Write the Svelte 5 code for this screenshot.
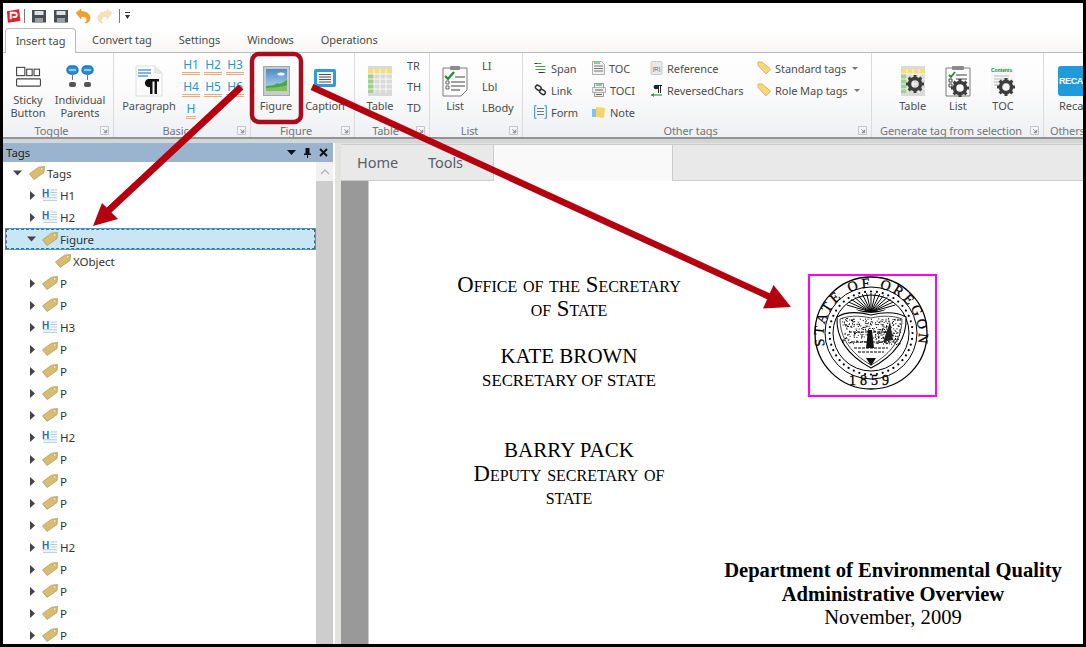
<script>
  const rows = [
    { l: 0, a: 'down', i: 'tag', t: 'Tags' },
    { l: 1, a: 'right', i: 'h', t: 'H1' },
    { l: 1, a: 'right', i: 'h', t: 'H2' },
    { l: 1, a: 'down', i: 'tag', t: 'Figure', sel: true },
    { l: 2, a: '', i: 'tag', t: 'XObject' },
    ...['P','P','H3','P','P','P','P','H2','P','P','P','P','H2','P','P','P','P'].map((t) => ({
      l: 1, a: 'right', i: t[0] === 'H' ? 'h' : 'tag', t
    }))
  ];
  const hs = ['H1', 'H2', 'H3', 'H4', 'H5', 'H6', 'H'];
  // deterministic speckle for the seal's shield
  const specks = [];
  let s = 7;
  const rnd = () => ((s = (s * 16807) % 2147483647) / 2147483647);
  for (let i = 0; i < 340; i++) {
    const x = 40 + rnd() * 58, y = 54 + rnd() * 26;
    specks.push({ x: x.toFixed(1), y: y.toFixed(1) });
  }
  const dots = Array.from({ length: 44 }, (_, i) => {
    const an = (i / 44) * Math.PI * 2;
    return { x: (69 + 41.5 * Math.cos(an)).toFixed(1), y: (69 + 41.5 * Math.sin(an)).toFixed(1) };
  });
  const rays = Array.from({ length: 15 }, (_, i) => {
    const an = Math.PI * (1.12 + (i / 14) * 0.76);
    return { x: (69 + 26 * Math.cos(an)).toFixed(1), y: (48 + 19 * Math.sin(an)).toFixed(1) };
  });
</script>

{#snippet launcher()}
  <svg class="launch" width="9" height="9" viewBox="0 0 9 9"><path d="M.5.5h8v8h-8z" fill="#f4f5f6" stroke="#c3c5c8"/><path d="M3 3l3.5 3.5M6.8 3.8v3h-3z" fill="#8d9196" stroke="#8d9196" stroke-width=".8"/></svg>
{/snippet}

{#snippet tagIcon()}
  <svg class="ti" width="16" height="14" viewBox="0 0 16 14"><path d="M.5 7.800 9.500 1.200 15.500.5 15 6.500 5 13.500z" fill="#d8bd70" stroke="#ad9250" stroke-width=".7"/><circle cx="12.800" cy="3" r="1.200" fill="#fff" stroke="#a88d48" stroke-width=".5"/></svg>
{/snippet}

{#snippet hIcon()}
  <svg class="ti" width="16" height="14" viewBox="0 0 16 14"><text x="0" y="8.500" class="hg">H</text><path d="M8.500 2h6.500M8.500 4.500h6.500M8.500 7h6.500M1 9.800h14M1 12.300h14" stroke="#a9c6e4" stroke-width="1"/></svg>
{/snippet}

{#snippet tagSmall()}
  <svg width="15" height="14" viewBox="0 0 15 14"><path d="M1 4.500V1h4l8.500 7-4.500 5z" fill="#f7d67e" stroke="#dcb558" stroke-width="1" stroke-linejoin="round"/></svg>
{/snippet}

{#snippet gear(x, y)}
  <g transform="translate({x} {y})">
    <circle r="5.500" fill="none" stroke="#3d3d3d" stroke-width="3.500"/>
    <path d="M-1.500-9h3v3h-3zM-1.500 6h3v3h-3zM-9-1.500h3v3h-3zM6-1.500h3v3h-3z" fill="#3d3d3d"/>
    <path d="M-1.500-9h3v3h-3zM-1.500 6h3v3h-3zM-9-1.500h3v3h-3zM6-1.500h3v3h-3z" fill="#3d3d3d" transform="rotate(45)"/>
  </g>
{/snippet}

<div class="shot">
  <div class="qat">
    <svg width="15" height="16" viewBox="0 0 16 16"><path d="M1 3 14 .8l1.300 12.500L2 15.300z" fill="#e3202c"/><path d="M5 11.500V4.500h4.200a2.300 2.300 0 0 1 0 4.600H7" fill="none" stroke="#fff" stroke-width="2"/></svg>
    <i class="qsep"></i>
    <svg class="mr" width="16" height="16" viewBox="0 0 16 16"><path d="M1 2h14v12.500H1z" fill="#474d53"/><path d="M3.500 3h9v4h-9z" fill="#dfe1e3"/><path d="M4 10h8v4.500H4z" fill="#9aa0a5"/></svg>
    <svg class="mr" width="16" height="16" viewBox="0 0 16 16"><path d="M1 2h14v12.500H1z" fill="#474d53"/><path d="M3.500 3h9v4h-9z" fill="#dfe1e3"/><path d="M4 10h8v4.500H4z" fill="#9aa0a5"/></svg>
    <svg class="mr" width="16" height="16" viewBox="0 0 16 16"><path d="M1 5 6 1v2.500c5 0 9 2 9 6.500 0 3-2 5-5 5 2-1.500 2.500-3.500 1-5-1-1-3-1.500-5-1.500V11z" fill="#f0a030" stroke="#e08a18" stroke-width=".5"/></svg>
    <svg class="mr" width="16" height="16" viewBox="0 0 16 16"><path d="M15 5 10 1v2.500c-5 0-9 2-9 6.500 0 3 2 5 5 5-2-1.500-2.500-3.500-1-5 1-1 3-1.500 5-1.500V11z" fill="#f9dfb4" stroke="#f0d098" stroke-width=".5"/></svg>
    <i class="qsep s2"></i>
    <svg width="5" height="8" viewBox="0 0 5 8"><path d="M0 0h5v1H0zM0 3h5L2.500 7z" fill="#333"/></svg>
  </div>

  <div class="tabs">
    <div class="tab active">Insert tag</div>
    <div class="tab">Convert tag</div>
    <div class="tab">Settings</div>
    <div class="tab">Windows</div>
    <div class="tab">Operations</div>
  </div>

  <div class="ribbon">
    <section class="group g1">
      <div class="gbody">
        <div class="big two w50">
          <span class="ic"><svg width="27" height="22" viewBox="0 0 28 24"><g fill="#fff" stroke="#444" stroke-width="1.200"><rect x="1" y="1.500" width="9" height="9"/><rect x="12" y="3.500" width="6" height="7"/><rect x="20" y="3.500" width="6" height="7"/><rect x="1" y="14" width="26" height="8" rx="1"/></g></svg></span>
          <span class="lb">Sticky<br />Button</span>
        </div>
        <div class="big two w54">
          <span class="ic"><svg width="28" height="24" viewBox="0 0 28 24"><g fill="#fff" stroke="#1778c0" stroke-width="1.400"><rect x="1" y="1" width="11" height="8" rx="4" fill="#2b8fd6"/><rect x="16" y="1" width="11" height="8" rx="4" fill="#2b8fd6"/></g><path d="M3 5h7M18 5h7" stroke="#fff" stroke-width="1.200"/><path d="M6.500 10v5M21.500 10v5" stroke="#777"/><rect x="3" y="17" width="7" height="5" rx="2" fill="#555"/><rect x="18" y="17" width="7" height="5" rx="2" fill="#555"/></svg></span>
          <span class="lb">Individual<br />Parents</span>
        </div>
      </div>
      <div class="glabel"><span>Toggle</span>{@render launcher()}</div>
    </section>

    <section class="group g2">
      <div class="gbody">
        <div class="big w60">
          <span class="ic"><svg width="28" height="32" viewBox="0 0 28 32"><path d="M1 1h19l7 7v23H1z" fill="#fbfbfb" stroke="#dedede"/><path d="M20 1v7h7" fill="#e8e8e8" stroke="#dedede"/><path d="M3 5h13M3 8h13M3 11h10" stroke="#5aa0dc" stroke-width="1.300"/><path d="M13 14H24v2.500h-2V29h-2.500V16.500h-2V29H15V22a4 4 0 0 1-2-8z" fill="#111"/></svg></span>
          <span class="lb">Paragraph</span>
        </div>
        <div class="hgrid">
          {#each hs as h}<span class="hb">{h}</span>{/each}
        </div>
      </div>
      <div class="glabel"><span>Basic</span>{@render launcher()}</div>
    </section>

    <section class="group g3">
      <div class="gbody">
        <div class="big w50">
          <span class="ic"><svg width="27" height="30" viewBox="0 0 27 30"><rect x=".5" y=".5" width="26" height="29" fill="#c9cacb" stroke="#a8a8a8"/><defs><linearGradient id="sky" x1="0" y1="0" x2="0" y2="1"><stop offset="0" stop-color="#4d8bc7"/><stop offset="1" stop-color="#bddcf0"/></linearGradient></defs><rect x="3" y="3" width="21" height="22" fill="url(#sky)"/><ellipse cx="18" cy="8" rx="3.500" ry="1.500" fill="#fff"/><path d="M3 25v-5c5-1 8 0 11-3 2 2 5 0 10-3v11z" fill="#4fa44a"/><path d="M3 25v-3c6-1 14 0 21-3v6z" fill="#7cc35b"/></svg></span>
          <span class="lb">Figure</span>
        </div>
        <div class="big w48">
          <span class="ic"><svg width="24" height="26" viewBox="0 0 24 26"><rect x="1" y="1" width="22" height="18" rx="2" fill="#2f9bd8"/><rect x="4" y="4" width="16" height="12" fill="#f2f2f2"/><path d="M6 6.500h12M6 9h12M6 11.500h12M6 14h12" stroke="#555"/></svg></span>
          <span class="lb">Caption</span>
        </div>
      </div>
      <div class="glabel"><span>Figure</span>{@render launcher()}</div>
    </section>

    <section class="group g4">
      <div class="gbody">
        <div class="big w50">
          <span class="ic"><svg width="24" height="30" viewBox="0 0 24 30"><rect width="24" height="30" fill="#dadada"/><rect y="3" width="24" height="5" fill="#f7dc7a"/><rect y="8" width="6" height="19" fill="#9fd08e"/><path d="M6 3v24M12 3v24M18 3v24M0 8h24M0 13h24M0 18h24M0 23h24" stroke="#fff" stroke-width=".8"/></svg></span>
          <span class="lb">Table</span>
        </div>
        <div class="minis"><span>TR</span><span>TH</span><span>TD</span></div>
      </div>
      <div class="glabel"><span>Table</span>{@render launcher()}</div>
    </section>

    <section class="group g5">
      <div class="gbody">
        <div class="big w50">
          <span class="ic"><svg width="26" height="32" viewBox="0 0 26 32"><path d="M1 3h24v22l-6 6H1z" fill="#fbfbfb" stroke="#7b7b7b"/><rect x="8" y="1" width="10" height="4" rx="1" fill="#8a8a8a"/><path d="M3 11l3 3 6-7" fill="none" stroke="#1c8a2c" stroke-width="2.200"/><path d="M13 12h10M9 17h14M9 21h14M9 25h9" stroke="#444"/><path d="M4 16h3v3H4zM4 21h3v3H4z" fill="none" stroke="#444" stroke-width=".8"/></svg></span>
          <span class="lb">List</span>
        </div>
        <div class="minis"><span>LI</span><span>Lbl</span><span>LBody</span></div>
      </div>
      <div class="glabel"><span>List</span>{@render launcher()}</div>
    </section>

    <section class="group g6">
      <div class="gbody cols">
        <div class="col ca">
          <div class="it"><svg width="12" height="12" viewBox="0 0 12 12"><path d="M3 1.500h4M1 4.500h10M1 7.500h10M5 10.500h6" stroke="#3aa04a" stroke-width="1.100"/><path d="M0 1.500h3M9 10.500H4" stroke="#333"/></svg><span>Span</span></div>
          <div class="it"><svg width="12" height="12" viewBox="0 0 12 12"><g fill="none" stroke="#333" stroke-width="1.500"><rect x=".8" y="1.800" width="6" height="4" rx="2" transform="rotate(35 3.800 3.800)"/><rect x="5" y="6" width="6" height="4" rx="2" transform="rotate(35 8 8)"/></g></svg><span>Link</span></div>
          <div class="it"><svg width="13" height="14" viewBox="0 0 13 14"><path d="M2.500.7H.7v12.600h1.800M10.500.7h1.800v12.600h-1.800" fill="none" stroke="#2c8fd6"/><path d="M3 3.500h7M3 6.500h7M3 9.500h7" stroke="#777"/></svg><span>Form</span></div>
        </div>
        <div class="col cb">
          <div class="it"><svg width="13" height="14" viewBox="0 0 13 14"><path d="M.5.5h9l3 3v10H.5z" fill="#f1f1f1" stroke="#b0b0b0"/><path d="M2 2h6" stroke="#2a9a50"/><path d="M2 5h9M2 7.500h9M2 10h9" stroke="#777"/></svg><span>TOC</span></div>
          <div class="it"><svg width="14" height="14" viewBox="0 0 14 14"><path d="M2.500.5h9v13h-9z" fill="#f1f1f1" stroke="#999"/><path d="M.5 4.500h13v5H.5z" fill="#eee" stroke="#777" stroke-dasharray="1 1"/><path d="M4 2h6" stroke="#2a9a50"/><path d="M3 7h8M4 11.500h6" stroke="#666"/></svg><span>TOCI</span></div>
          <div class="it"><svg width="14" height="13" viewBox="0 0 14 13"><path d="M0 3h7v8H0z" fill="#7fc4ea"/><path d="M4 1l9 1-1 10-8-1z" fill="#f4d768"/></svg><span>Note</span></div>
        </div>
        <div class="col cc">
          <div class="it"><svg width="12" height="14" viewBox="0 0 12 14"><rect x=".5" y=".5" width="11" height="13" rx="1" fill="#e8e8e8" stroke="#ccc"/><text x="6" y="9.500" class="rg">[R]</text></svg><span>Reference</span></div>
          <div class="it"><svg width="13" height="13" viewBox="0 0 13 13"><path d="M5 1h7v1h-1v7h-1V2H9v7H8V5H6.500a2 2 0 0 1-1.500-4z" fill="#222"/><path d="M1 11h11" stroke="#2aa040" stroke-width="1.200"/><path d="M1 11l3-2v4z" fill="#2aa040"/></svg><span>ReversedChars</span></div>
        </div>
        <div class="col cd">
          <div class="it">{@render tagSmall()}<span>Standard tags</span><b class="caret"></b></div>
          <div class="it">{@render tagSmall()}<span>Role Map tags</span><b class="caret"></b></div>
        </div>
      </div>
      <div class="glabel"><span>Other tags</span>{@render launcher()}</div>
    </section>

    <section class="group g7">
      <div class="gbody">
        <div class="big w45">
          <span class="ic"><svg width="24" height="30" viewBox="0 0 24 30"><rect width="24" height="30" fill="#dadada"/><rect y="3" width="24" height="5" fill="#f7dc7a"/><rect y="8" width="6" height="19" fill="#9fd08e"/><path d="M6 3v24M12 3v24M18 3v24M0 8h24M0 13h24M0 18h24M0 23h24" stroke="#fff" stroke-width=".8"/>{@render gear(14, 18)}</svg></span>
          <span class="lb">Table</span>
        </div>
        <div class="big w45">
          <span class="ic"><svg width="26" height="32" viewBox="0 0 26 32"><path d="M1 3h24v28H1z" fill="#fbfbfb" stroke="#7b7b7b"/><rect x="7" y="1" width="12" height="4" rx="1" fill="#8a8a8a"/><path d="M4 10l2 2 4-5" fill="none" stroke="#1c8a2c" stroke-width="1.800"/><path d="M11 10h11M11 14h11M4 14h3v3H4zM4 19h3v3H4z" fill="none" stroke="#444"/>{@render gear(15, 23)}</svg></span>
          <span class="lb">List</span>
        </div>
        <div class="big w45">
          <span class="ic"><svg width="24" height="30" viewBox="0 0 24 30"><path d="M0 0h18l6 6v24H0z" fill="#f6f6f6"/><text x="0" y="6" class="ct">Contents</text><path d="M3 10h15M3 13h15M3 16h10M3 19h10" stroke="#bbb"/>{@render gear(15, 21)}</svg></span>
          <span class="lb">TOC</span>
        </div>
      </div>
      <div class="glabel"><span>Generate tag from selection</span>{@render launcher()}</div>
    </section>

    <section class="group g8">
      <div class="gbody">
        <div class="big w50b">
          <span class="ic"><span class="recal">RECAL</span></span>
          <span class="lb">Recall</span>
        </div>
      </div>
      <div class="glabel left"><span>Others</span></div>
    </section>
  </div>

  <div class="main">
    <aside class="panel">
      <header class="phead">
        <span class="ptitle">Tags</span>
        <svg width="9" height="5" viewBox="0 0 9 5"><path d="M0 0h9L4.500 5z" fill="#111"/></svg>
        <svg width="7" height="10" viewBox="0 0 7 10"><path d="M1.500 0h4v5.500h1.500V7H4v3H3V7H0V5.500h1.500z" fill="#111"/></svg>
        <svg width="9" height="9" viewBox="0 0 9 9"><path d="M1 1l7 7M8 1 1 8" stroke="#111" stroke-width="2"/></svg>
      </header>
      <div class="pbody">
        <div class="tree">
          {#each rows as r}
            <div class="row l{r.l}" class:sel={r.sel}>
              {#if r.a}
                <span class="arr">
                  {#if r.a === 'down'}
                    <svg width="9" height="6" viewBox="0 0 9 6"><path d="M0 .5h9L4.500 5.500z" fill="#444"/></svg>
                  {:else}
                    <svg class="rt" width="5" height="9" viewBox="0 0 5 9"><path d="M0 0l5 4.500L0 9z" fill="#444"/></svg>
                  {/if}
                </span>
              {/if}
              {#if r.i === 'tag'}{@render tagIcon()}{:else}{@render hIcon()}{/if}
              <span class="rt-t">{r.t}</span>
            </div>
          {/each}
        </div>
        <div class="scroll">
          <div class="sbtn"><svg width="10" height="6" viewBox="0 0 10 6"><path d="M1 5l4-4 4 4" fill="none" stroke="#b5b5b5" stroke-width="1.300"/></svg></div>
        </div>
      </div>
    </aside>

    <div class="doc">
      <div class="dtabs">
        <div class="dhome"><span>Home</span><span>Tools</span></div>
        <div class="dactive"></div>
        <div class="drest"></div>
      </div>
      <div class="dbody">
        <div class="gutter"></div>
        <div class="page">
          <div class="ptop">
            <div class="office">
              <div class="sc">Office of the Secretary</div>
              <div class="sc">of State</div>
              <div class="name">KATE BROWN</div>
              <div class="cap">SECRETARY OF STATE</div>
              <div class="name n2">BARRY PACK</div>
              <div class="sc">Deputy secretary of</div>
              <div class="sc last">state</div>
            </div>
            <div class="sealbox">
              <svg width="125" height="119" viewBox="0 0 125 119">
                <defs>
                  <path id="arcTop" d="M 22 78 a 47.500 47.500 0 1 1 94 0"/>
                </defs>
                <g transform="translate(-8 -12)">
                  <g fill="none" stroke="#000">
                    <circle cx="69" cy="69" r="56" stroke-width="1.300"/>
                    <circle cx="69" cy="69" r="46" stroke-width="1"/>
                    <circle cx="69" cy="69" r="38" stroke-width="1"/>
                  </g>
                  {#each dots as d}<circle cx={d.x} cy={d.y} r="1.100" fill="#000"/>{/each}
                  <text class="seal"><textPath href="#arcTop" startOffset="50%" text-anchor="middle">STATE OF OREGON</textPath></text>
                  <text class="seal y" x="69" y="121" text-anchor="middle">1859</text>
                  <path d="M35 53c8-5 18-6 34-2 16-4 26-3 35 2 1 20-10 38-35 51C45 91 34 73 35 53z" fill="#fff" stroke="#000" stroke-width="1.100"/>
                  <path d="M38 55c8-3 18-4 31-1 13-3 23-2 31 1 0 18-9 34-31 46C48 89 38 73 38 55z" fill="none" stroke="#000" stroke-width=".7"/>
                  {#each rays as r}<path d="M69 48L{r.x} {r.y}" stroke="#000" stroke-width="1"/>{/each}
                  <path d="M54 45c6 3 24 3 30 0-5 5-25 5-30 0z" fill="#000"/>
                  {#each specks as p}<rect x={p.x} y={p.y} width="1" height="1" fill="#000"/>{/each}
                  <path d="M47 68h44M50 78h38M52 84h34M56 88h26" stroke="#000" stroke-width="1" stroke-dasharray="3 1"/>
                  <path d="M66 66l-2 18h8l-2-18zM64 94h10l-5 8z" fill="#111"/>
                  <path d="M88 58l3 18-10 2z" fill="#222"/>
                </g>
              </svg>
            </div>
          </div>
          <div class="dept">
            <div class="b">Department of Environmental Quality</div>
            <div class="b">Administrative Overview</div>
            <div>November, 2009</div>
          </div>
        </div>
      </div>
    </div>
  </div>

  <svg class="over" width="1086" height="647" viewBox="0 0 1086 647">
    <rect x="252" y="54" width="49" height="68" rx="7" fill="none" stroke="#a80d1e" stroke-width="4.500"/>
    <path d="M241 87 108 211" stroke="#b5000f" stroke-width="7"/>
    <path d="M93 226 102 203 118 219z" fill="#b5000f"/>
    <path d="M312 87 770 297" stroke="#b5000f" stroke-width="6.500"/>
    <path d="M791 307 763 308.500 773.500 285z" fill="#b5000f"/>
  </svg>
</div>

<style>
  :global(body) { margin: 0; }
  .shot {
    position: relative; width: 1086px; height: 647px; box-sizing: border-box;
    border: 3px solid #000; overflow: hidden; display: flex; flex-direction: column;
    background: #fff; font-family: "Noto Sans", sans-serif; color: #4d4d4d; font-size: 11px; letter-spacing: -.06px;
  }
  .over { position: absolute; left: -3px; top: -3px; pointer-events: none; }

  .qat { height: 25px; display: flex; align-items: center; padding-left: 3px; flex: none; }
  .qat svg { flex: none; }
  .qsep { width: 1px; height: 14px; background: #777; margin: 0 6px 0 3px; }
  .qsep.s2 { margin: 0 5px 0 0; }
  .mr { margin-right: 6px; }

  .tabs { height: 24px; display: flex; align-items: stretch; gap: 27px; flex: none; padding-left: 2px; background: linear-gradient(#fff, #f8f7f5); }
  .tab { line-height: 23px; font-size: 11px; white-space: nowrap; color: #4a4a4a; }
  .tab.active {
    width: 71px; box-sizing: border-box; height: 25px; margin-right: -11px; text-align: center; background: #fff;
    border: 1px solid #b8babc; border-bottom: 0; border-radius: 4px 4px 0 0; position: relative; z-index: 1;
  }

  .ribbon {
    height: 87px; flex: none; display: flex; box-sizing: border-box;
    border-top: 1px solid #b8babc; border-bottom: 2px solid #8f9498;
    background: linear-gradient(#fff 0, #fbfbfc 45%, #eef0f3 100%);
  }
  .group { flex: none; display: flex; flex-direction: column; border-right: 1px solid #d9dbdd; box-sizing: border-box; overflow: hidden; }
  .g1 { width: 111px; } .g2 { width: 137px; } .g3 { width: 104px; } .g4 { width: 75px; }
  .g5 { width: 93px; } .g6 { width: 349px; } .g7 { width: 172px; } .g8 { width: 39px; border: 0; }
  .gbody { flex: 1; display: flex; min-height: 0; }
  .glabel { height: 13px; display: flex; align-items: center; color: #70757a; font-size: 11px; letter-spacing: -.1px; flex: none; }
  .glabel > span { flex: 1; text-align: center; white-space: nowrap; }
  .glabel.left > span { text-align: left; padding-left: 6px; }
  .launch { margin-right: 4px; flex: none; }

  .big { display: flex; flex-direction: column; align-items: center; padding-top: 9px; flex: none; text-align: center; }
  .ic { height: 37px; display: flex; align-items: center; justify-content: center; }
  .two .ic { height: 29px; margin-bottom: 2px; }
  .lb { line-height: 14px; white-space: nowrap; }
  .two .lb { line-height: 13px; }
  .w50 { width: 50px; } .w54 { width: 54px; } .w48 { width: 48px; } .w45 { width: 45.200px; }
  .w60 { width: 60px; margin-left: 5px; }
  .g7 .gbody { padding-left: 18px; }
  .g8 .big { width: 60px; align-items: flex-start; padding-left: 14px; box-sizing: border-box; }
  .g8 .lb { margin-left: 1px; }
  .recal {
    width: 34px; height: 30px; background: #1f9bd9; border-radius: 3px; color: #fff; font-weight: 700;
    font-family: "Liberation Sans", sans-serif; font-size: 9px; letter-spacing: -.4px; line-height: 30px; text-align: left; padding-left: 1px;
  }

  .hgrid { display: grid; grid-template-columns: repeat(3, 22px); grid-auto-rows: 22px; margin: 2px 0 0 1px; }
  .hb {
    align-self: center; justify-self: center; color: #1a9ad6; font-size: 12px; line-height: 14px;
    border-bottom: 3px double #f0a878; padding: 0 1px; box-sizing: border-box; height: 17px;
  }

  .minis { display: flex; flex-direction: column; padding-top: 2px; margin-left: 2px; }
  .minis span { height: 21px; line-height: 21px; }

  .cols { padding: 4px 0 0 11px; }
  .col { flex: none; }
  .ca, .cb { width: 58px; } .cc { width: 107px; }
  .it { height: 22px; display: flex; align-items: center; gap: 4px; white-space: nowrap; }
  .it svg { flex: none; }
  .ca svg, .cb svg, .cc svg { min-width: 13px; }
  .cd svg { margin-right: -1px; }
  .caret { width: 0; height: 0; border: 3px solid transparent; border-top: 3px solid #777; border-bottom: 0; margin-left: 2px; }

  .hg { font: 700 10px "Liberation Sans", sans-serif; fill: #2f6ea8; }
  .rg { font: 6px "Liberation Sans", sans-serif; fill: #666; text-anchor: middle; }
  .ct { font: 700 5px "Liberation Sans", sans-serif; fill: #1f8a50; }

  .main { flex: 1; min-height: 0; display: flex; border-top: 4px solid #d4d5d6; }
  .panel { width: 330px; flex: none; display: flex; flex-direction: column; }
  .phead {
    height: 19px; flex: none; background: #9ab4d0; display: flex; align-items: center; gap: 8px; padding: 0 5px 0 3px; color: #222;
  }
  .ptitle { flex: 1; font-size: 11.500px; }
  .pbody { flex: 1; min-height: 0; display: flex; }
  .tree { width: 313px; flex: none; overflow: hidden; }
  .row { height: 22px; display: flex; align-items: center; box-sizing: border-box; font-size: 11.600px; color: #333; }
  .l0 { padding-left: 10px; }
  .l1 { padding-left: 23px; }
  .l2 { padding-left: 52px; }
  .arr { display: flex; align-items: center; flex: none; width: 16px; }
  .rt { margin-left: 4px; }
  .ti { flex: none; }
  .rt-t { margin-left: 2px; }
  .sel {
    margin-left: 2px; padding-left: 20px; border: 1px solid #3a9dd0; background: #c9e6f5;
    outline: 1px dashed #4a6a7a; outline-offset: -2px;
  }
  .sel .arr svg { margin-left: 1px; }
  .scroll { width: 17px; flex: none; background: #cdcdcd; }
  .sbtn { height: 19px; background: #f1f1f1; display: flex; align-items: center; justify-content: center; }

  .doc { flex: 1; min-width: 0; display: flex; flex-direction: column; margin-left: 1px; border-left: 1px solid #fff; padding-left: 6px; background: #e3e2de; }
  .dtabs { height: 37px; flex: none; display: flex; margin-top: 1px; box-sizing: border-box; border-top: 1px solid #ccc; border-bottom: 1px solid #ccc; background: #e9e9e9; }
  .dhome { width: 152px; flex: none; display: flex; align-items: center; gap: 30px; padding: 0 0 2px 16px; box-sizing: border-box; font-size: 14.500px; color: #56606a; }
  .dactive { width: 180px; flex: none; background: #f9f9f9; border-left: 1px solid #ccc; border-right: 1px solid #ccc; box-sizing: border-box; margin-bottom: -1px; }
  .drest { flex: 1; }
  .dbody { flex: 1; min-height: 0; display: flex; }
  .gutter { width: 27px; flex: none; background: #999; border-right: 1px solid #ccc; }
  .page { flex: 1; min-width: 0; background: #fff; color: #000; font-family: "Liberation Serif", serif; overflow: hidden; letter-spacing: 0; }
  .ptop { display: flex; align-items: flex-start; }
  .office { width: 400px; flex: none; text-align: center; padding-top: 92px; line-height: 24px; }
  .sc { font-variant: small-caps; font-size: 22.700px; }
  .last { margin-top: -1px; }
  .name { font-size: 21px; margin-top: 23px; }
  .n2 { margin-top: 45px; }
  .cap { font-size: 16.800px; margin-top: 1px; }
  .sealbox {
    margin: 93px 0 0 39px; width: 129px; height: 123px; box-sizing: border-box; border: 2px solid #f0f; flex: none; overflow: hidden; line-height: 0;
  }
  .seal { font: 400 14px "Liberation Serif", serif; letter-spacing: 3.100px; fill: #000; stroke: #000; stroke-width: .3px; }
  .seal.y { letter-spacing: 4px; font-size: 14px; }
  .dept { margin: 50px 0 0 334px; width: 380px; text-align: center; font-size: 20.600px; line-height: 23.500px; }
  .b { font-weight: 700; }
</style>
